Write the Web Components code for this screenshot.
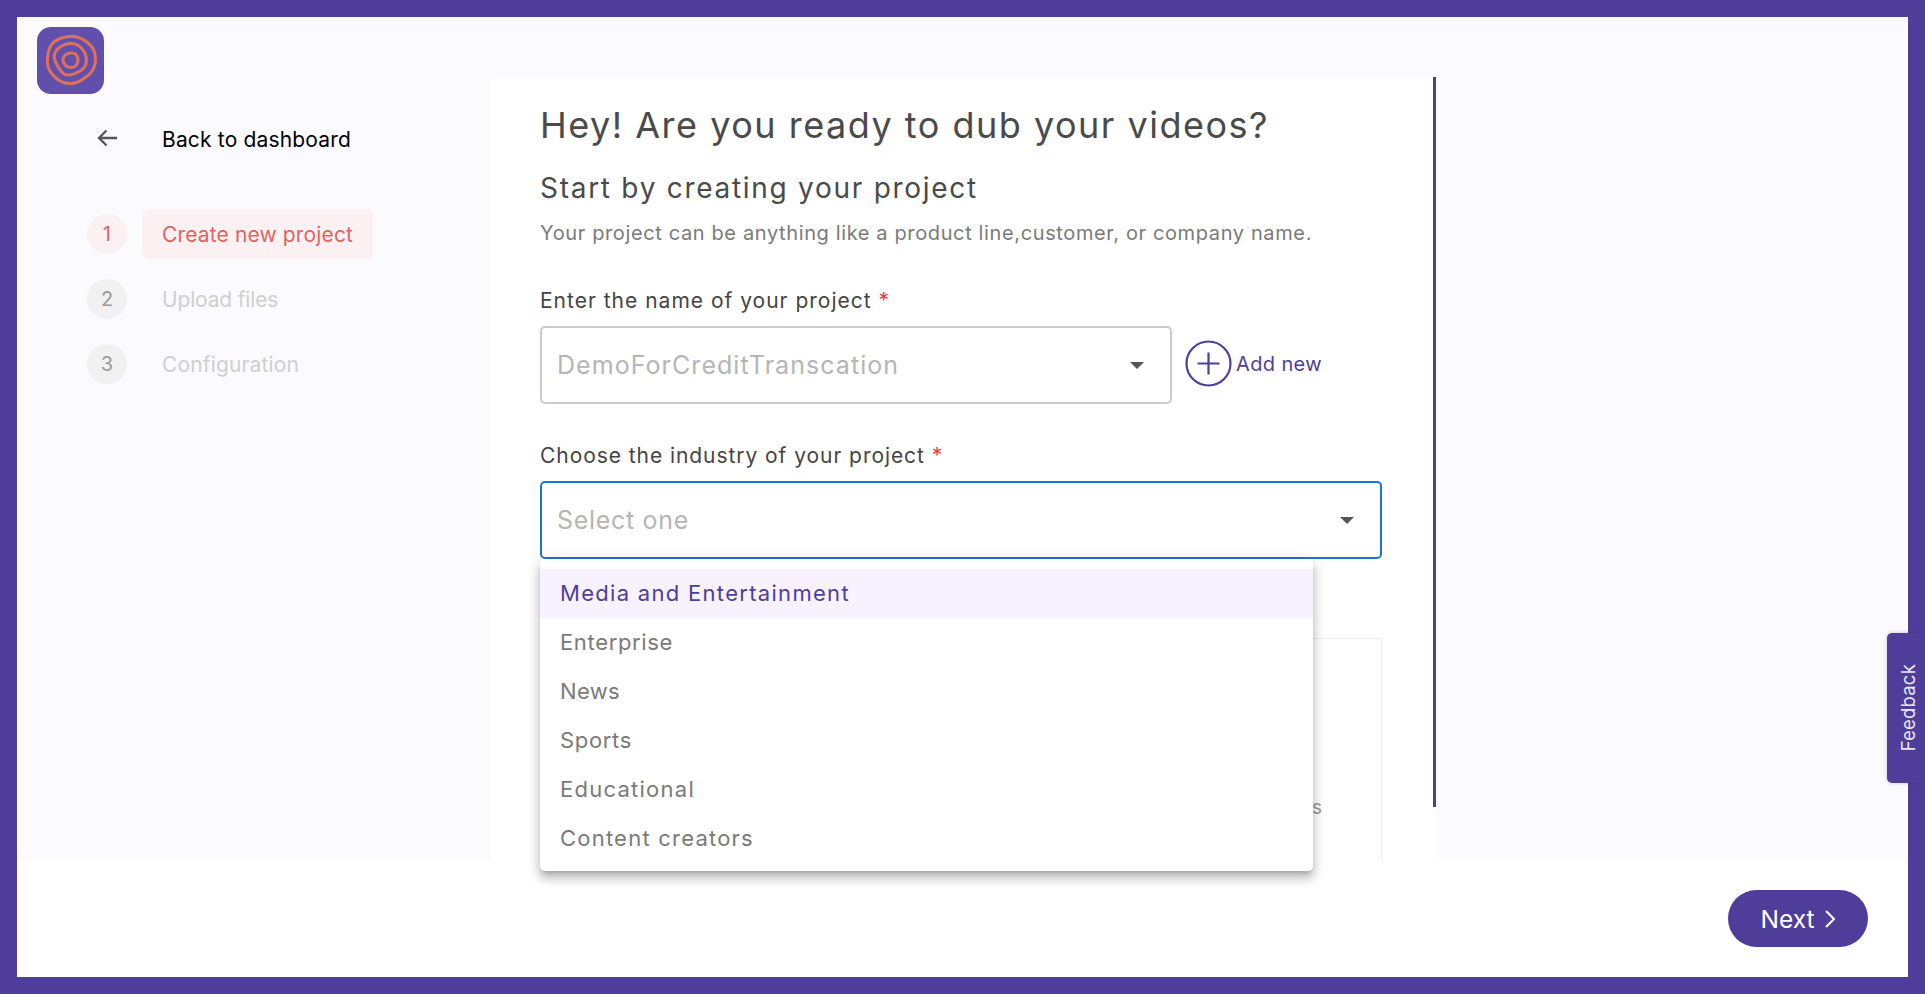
<!DOCTYPE html>
<html><head><meta charset="utf-8"><style>
html,body{margin:0;padding:0;height:100%;overflow:hidden;background:#fff}
body{font-family:Inter,"Liberation Sans",sans-serif}
</style></head><body>
<app-frame>
<side-nav slot="side"></side-nav>
<dub-form slot="main"></dub-form>
<next-button slot="foot"></next-button>
</app-frame>
<script>
const def=(n,html)=>customElements.define(n,class extends HTMLElement{constructor(){super();this.attachShadow({mode:'open'}).innerHTML=html;}});
def('app-frame',`<style>:host{display:block;box-sizing:border-box;width:1925px;height:994px;border:17px solid #4f3e99;background:#fff;position:relative}
.top{display:flex;height:843px;background:#fbfaff}
.side{width:473px;flex:none}.main{width:946px;flex:none}
.foot{height:117px;display:flex;justify-content:flex-end;padding:30px 40px 0 0;box-sizing:border-box}
</style><div class="top"><div class="side"><slot name="side"></slot></div><div class="main"><slot name="main"></slot></div></div>
<div class="foot"><slot name="foot"></slot></div><feedback-tab></feedback-tab>`);
def('brand-logo',`<style>:host{display:block;width:67px;height:67px}svg{display:block}</style>
<svg width="67" height="67" viewBox="0 0 67 67"><rect width="67" height="67" rx="14" fill="#6150ab"/>
<g fill="none" stroke="#e0705c" stroke-width="3" stroke-linejoin="round">
<path d="M32 9.500C38 8.500 45 11 51 16C56 20 59 27 58.500 34C58 41 55 46 49 50C44 54 38 57 32 56.500C26 56 20 53 16 48C11 43 10 37 10.500 31C11 25 12 19 17 15C21 12 26 10 32 9.500Z"/>
<path d="M33 16.500C38 16 43 19 46 23C49 27 50 32 49 37C48 42 44 44 39 46C35 48 31 49 27 47C23 44 21 40 19 36C17 32 17 27 19 24C22 20 27 17 33 16.500Z"/>
<path d="M33 26C36 25.500 39.500 27 40.500 30C41.500 33 41 36 39 38.500C37 40.500 33 41 30 39.500C27.500 38 26 35 26 32C26.500 29 29.500 26.500 33 26Z"/></g></svg>`);
def('step-item',`<style>:host{display:flex;align-items:center;height:50px;gap:15px;margin-left:70px}
.n{width:40px;height:40px;border-radius:50%;background:#f1f1f1;color:#9a9a9a;display:flex;align-items:center;justify-content:center;font-size:20px}
.p{height:50px;display:flex;align-items:center;padding:0 20px;border-radius:6px;font-size:21px;color:#cfcfcf;white-space:nowrap}
:host([active]) .n{background:#fbf1f3;color:#e0645f}:host([active]) .p{background:#fbf1f3;color:#e0645f}
</style><div class="n"><slot name="n"></slot></div><div class="p"><slot></slot></div>`);
def('side-nav',`<style>:host{display:block;padding-top:10px}
brand-logo{margin-left:20px}
.back{display:flex;align-items:center;height:26px;margin-top:32px;margin-left:80px;font-size:21px;letter-spacing:.17px;color:#000;white-space:nowrap}
.back svg{display:block;margin-right:45px;margin-bottom:2px}
.steps{display:flex;flex-direction:column;gap:15px;margin-top:57px}
</style><brand-logo></brand-logo>
<div class="back"><svg width="20" height="18" viewBox="0 0 20 18" fill="none" stroke="#555" stroke-width="2.300"><path d="M20 9H2M9.500 1.500L2 9l7.500 7.500"/></svg><span>Back to dashboard</span></div>
<div class="steps"><step-item active style="letter-spacing:.14px"><span slot="n">1</span>Create new project</step-item><step-item style="letter-spacing:-.17px"><span slot="n">2</span>Upload files</step-item><step-item style="letter-spacing:.15px"><span slot="n">3</span>Configuration</step-item></div>`);
def('field-select',`<style>:host{display:block;position:relative;box-sizing:border-box;height:78px;border:2px solid #cacaca;border-radius:5px;background:#fff}
:host([focused]){border-color:#1976d2}
.v{position:absolute;left:15px;top:0;bottom:0;display:flex;align-items:center;font-size:25px;color:#b5b5b5;white-space:nowrap}
svg{position:absolute;right:26px;top:34px;display:block}
</style><div class="v"><slot name="value"></slot></div><svg width="14" height="7" viewBox="0 0 14 7"><path d="M0 0h14L7 7z" fill="#555"/></svg><slot></slot>`);
def('option-menu',`<style>:host{display:block;position:absolute;left:-2px;top:76px;width:773px;box-sizing:border-box;padding:10px 0 8px;background:#fff;border-radius:5px;box-shadow:0 5px 5px -3px rgba(0,0,0,.2),0 8px 10px 1px rgba(0,0,0,.14),0 3px 14px 2px rgba(0,0,0,.12);z-index:5}</style><slot></slot>`);
def('option-item',`<style>:host{display:flex;align-items:center;box-sizing:border-box;height:49px;padding:0 0 2px 20px;font-size:22px;color:#7a7a7a;white-space:nowrap}
:host([active]){background:#f7f2fd;color:#4f3e99}</style><slot></slot>`);
def('add-new',`<style>:host{display:flex;align-items:center;gap:4px;margin-bottom:3px;color:#4f3e99;font-size:20px;letter-spacing:.37px;white-space:nowrap}svg{display:block}</style>
<svg width="47" height="47" viewBox="0 0 47 47" fill="none" stroke="#4f3e99" stroke-width="2.200"><circle cx="23.500" cy="23.500" r="22"/><path d="M12.500 23.500h22M23.500 12.500v22"/></svg><slot></slot>`);
def('dub-form',`<style>:host{display:flex;background:#fff;margin-top:60px;height:783px}
.c{width:943px;box-sizing:border-box;padding-left:50px;color:#4a4a4a}
.thumb{width:3px;height:730px;background:#4f3e99}
h1,h2,p{margin:0;font-weight:400;white-space:nowrap}
h1{font-size:36px;letter-spacing:1.5px;line-height:48px;margin-top:24px}
h2{font-size:28px;letter-spacing:1.72px;line-height:36px;margin-top:21px}
p{font-size:20px;letter-spacing:.626px;line-height:28px;margin-top:13px;color:#7a7a7a}
.l{font-size:21px;line-height:30px;white-space:nowrap;color:#444}
.l b{font-weight:400;color:#f03a3a;}
.row{display:flex;align-items:center;gap:13px;margin-top:10px}
.row field-select{width:632px}
.box{box-sizing:border-box;height:222px;margin-top:79px;border:1px solid #eee;border-bottom:0;text-align:right;padding:157px 59px 0 0;font-size:19px;color:#999}
.w{width:842px}
</style><div class="c"><div class="w"><h1>Hey! Are you ready to dub your videos?</h1><h2>Start by creating your project</h2>
<p>Your project can be anything like a product line,customer, or company name.</p>
<div class="l" style="margin-top:39px;letter-spacing:1px">Enter the name of your project <b>*</b></div>
<div class="row"><field-select style="letter-spacing:1.05px"><span slot="value">DemoForCreditTranscation</span></field-select><add-new>Add new</add-new></div>
<div class="l" style="margin-top:37px;letter-spacing:.94px">Choose the industry of your project <b>*</b></div>
<field-select focused style="margin-top:10px;letter-spacing:.69px"><span slot="value">Select one</span><option-menu><option-item active style="letter-spacing:1.3px">Media and Entertainment</option-item><option-item style="letter-spacing:.65px">Enterprise</option-item><option-item style="letter-spacing:.33px">News</option-item><option-item style="letter-spacing:.67px">Sports</option-item><option-item style="letter-spacing:1.25px">Educational</option-item><option-item style="letter-spacing:1.22px">Content creators</option-item></option-menu></field-select>
<div class="box">s</div></div></div><div class="thumb"></div>`);
def('next-button',`<style>:host{display:flex;align-items:center;justify-content:center;gap:10px;width:140px;height:57px;padding-right:1px;box-sizing:border-box;border-radius:29px;background:#4f3e99;color:#fff;font-size:24.500px}svg{display:block}</style><span>Next</span><svg width="10" height="18" viewBox="0 0 10 18" fill="none" stroke="#fff" stroke-width="2"><path d="M1 1l8 8-8 8"/></svg>`);
def('feedback-tab',`<style>:host{position:absolute;right:-17px;top:616px;width:38px;height:150px;background:#4f3e99;border-radius:5px 0 0 5px;box-shadow:0 0 4px rgba(0,0,0,.2);display:flex;align-items:center;justify-content:center;color:#e8e6f4;font-size:18.500px;letter-spacing:.2px}
span{writing-mode:vertical-rl;transform:translateX(2px) rotate(180deg)}</style><span>Feedback</span>`);
</script></body></html>
